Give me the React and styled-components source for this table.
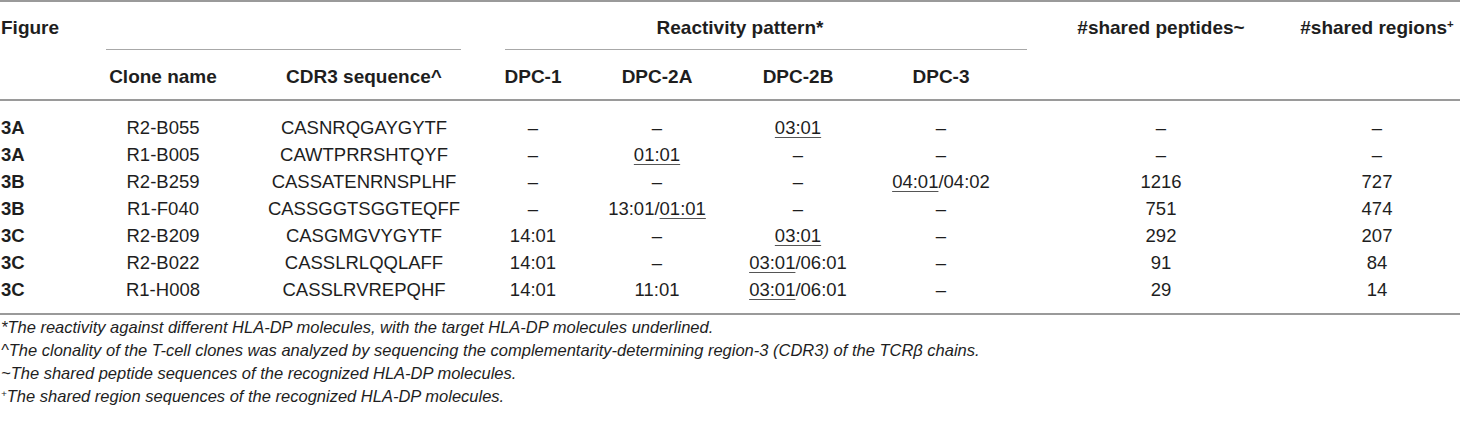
import React from 'react';
import styled, { createGlobalStyle } from 'styled-components';

const COLUMNS = '84px 159.5px 239.5px 102px 142px 142px 162.5px 241px 187.5px';
const LINE = '#9a9a9a';
const INK = '#1e1e1e';

// left/right padding per data column so the centers land where the figure has them
const PAD = [
  [1, 0],
  [0, 1.5],
  [1.5, 0],
  [0, 2],
  [2, 0],
  [0, 0],
  [0, 18.5],
  [18, 0],
  [21.5, 0],
];

const GlobalStyle = createGlobalStyle`
  html, body {
    margin: 0;
    padding: 0;
    background: #fff;
    overflow: hidden;
  }
  body {
    font-family: "Liberation Sans", Arial, sans-serif;
    color: ${INK};
  }
`;

const Wrapper = styled.div`
  width: 1460px;
`;

const Header = styled.div`
  display: grid;
  grid-template-columns: ${COLUMNS};
  grid-template-rows: 48px 49px;
  border-top: 2px solid ${LINE};
  border-bottom: 2px solid ${LINE};
  font-weight: bold;
  font-size: 19px;
  line-height: 24px;
`;

const HeadCell = styled.div`
  grid-column: ${(p) => p.$col};
  grid-row: ${(p) => p.$row};
  padding-top: ${(p) => (p.$row === 2 ? 14.6 : 13.6)}px;
  padding-left: ${(p) => p.$pl || 0}px;
  padding-right: ${(p) => p.$pr || 0}px;
  text-align: ${(p) => (p.$left ? 'left' : 'center')};
  white-space: nowrap;
`;

const GroupCell = styled.div`
  grid-column: ${(p) => p.$col};
  grid-row: 1;
  box-sizing: border-box;
  margin: 0 ${(p) => p.$mr}px 0 ${(p) => p.$ml}px;
  padding-top: 13.6px;
  padding-right: ${(p) => p.$shift || 0}px;
  border-bottom: 1px solid #a8a8a8;
  text-align: center;
  white-space: nowrap;
`;

const Body = styled.div`
  padding: 12.6px 0 9.35px;
  border-bottom: 2px solid ${LINE};
`;

const Row = styled.div`
  display: grid;
  grid-template-columns: ${COLUMNS};
  height: 27.15px;
  font-size: 18.5px;
  line-height: 27.15px;
`;

const Cell = styled.div`
  padding-left: ${(p) => p.$pl}px;
  padding-right: ${(p) => p.$pr}px;
  text-align: ${(p) => (p.$left ? 'left' : 'center')};
  font-weight: ${(p) => (p.$bold ? 'bold' : 'normal')};
  white-space: nowrap;
`;

const Target = styled.span`
  text-decoration: underline;
  text-decoration-thickness: 1px;
  text-underline-offset: 3px;
  text-decoration-color: #555;
`;

const Sup = styled.sup`
  font-size: 0.6em;
  line-height: 0;
  vertical-align: 0.55em;
`;

const Notes = styled.div`
  padding: 0.8px 0 0 1px;
`;

const Note = styled.p`
  margin: 0;
  font-family: "Liberation Sans Narrow", "Liberation Sans", Arial, sans-serif;
  font-style: italic;
  font-size: 16.5px;
  line-height: 23px;
  white-space: nowrap;
`;

const D = '–';

const rows = [
  ['3A', 'R2-B055', 'CASNRQGAYGYTF', D, D, <Target>03:01</Target>, D, D, D],
  ['3A', 'R1-B005', 'CAWTPRRSHTQYF', D, <Target>01:01</Target>, D, D, D, D],
  ['3B', 'R2-B259', 'CASSATENRNSPLHF', D, D, D, <><Target>04:01</Target>/04:02</>, '1216', '727'],
  ['3B', 'R1-F040', 'CASSGGTSGGTEQFF', D, <>13:01/<Target>01:01</Target></>, D, D, '751', '474'],
  ['3C', 'R2-B209', 'CASGMGVYGYTF', '14:01', D, <Target>03:01</Target>, D, '292', '207'],
  ['3C', 'R2-B022', 'CASSLRLQQLAFF', '14:01', D, <><Target>03:01</Target>/06:01</>, D, '91', '84'],
  ['3C', 'R1-H008', 'CASSLRVREPQHF', '14:01', '11:01', <><Target>03:01</Target>/06:01</>, D, '29', '14'],
];

const subHeads = ['Clone name', 'CDR3 sequence^', 'DPC-1', 'DPC-2A', 'DPC-2B', 'DPC-3'];

const App = () => (
  <Wrapper>
    <GlobalStyle />
    <Header>
      <HeadCell $col={1} $row="1 / 3" $left $pl={1}>Figure</HeadCell>
      <GroupCell $col="2 / 4" $ml={22} $mr={22} />
      <GroupCell $col="4 / 8" $ml={22} $mr={4.5} $shift={52}>Reactivity pattern*</GroupCell>
      <HeadCell $col={8} $row={1} $pl={PAD[7][0]} $pr={PAD[7][1]}>#shared peptides~</HeadCell>
      <HeadCell $col={9} $row={1} $pl={PAD[8][0]} $pr={PAD[8][1]}>
        #shared regions<Sup>+</Sup>
      </HeadCell>
      {subHeads.map((label, i) => (
        <HeadCell key={label} $col={i + 2} $row={2} $pl={PAD[i + 1][0]} $pr={PAD[i + 1][1]}>
          {label}
        </HeadCell>
      ))}
    </Header>
    <Body>
      {rows.map((row, r) => (
        <Row key={r}>
          {row.map((value, c) => (
            <Cell key={c} $left={c === 0} $bold={c === 0} $pl={PAD[c][0]} $pr={PAD[c][1]}>
              {value}
            </Cell>
          ))}
        </Row>
      ))}
    </Body>
    <Notes>
      <Note>*The reactivity against different HLA-DP molecules, with the target HLA-DP molecules underlined.</Note>
      <Note>^The clonality of the T-cell clones was analyzed by sequencing the complementarity-determining region-3 (CDR3) of the TCRβ chains.</Note>
      <Note>~The shared peptide sequences of the recognized HLA-DP molecules.</Note>
      <Note><Sup>+</Sup>The shared region sequences of the recognized HLA-DP molecules.</Note>
    </Notes>
  </Wrapper>
);

export default App;
